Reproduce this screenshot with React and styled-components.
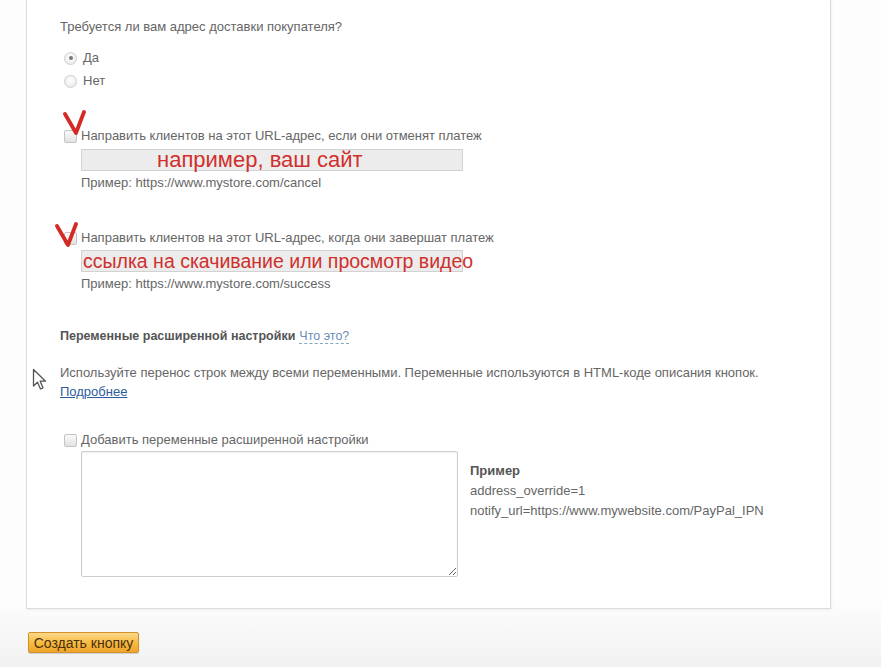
import React from "react";
import styled, { createGlobalStyle } from "styled-components";

const GlobalStyle = createGlobalStyle`
  html, body {
    margin: 0;
    padding: 0;
  }
  body {
    width: 881px;
    min-height: 667px;
    background: linear-gradient(to bottom, #fdfdfd 0, #fdfdfd 600px, #f1f1f1 667px);
    font-family: "Liberation Sans", Arial, sans-serif;
    color: #666;
    overflow: hidden;
  }
`;

const Page = styled.div`
  padding: 0 0 0 26px;
`;

const Panel = styled.div`
  position: relative;
  box-sizing: border-box;
  width: 805px;
  background: #fff;
  border: 1px solid #dcdcdc;
  border-top: none;
  box-shadow: 1px 1px 2px rgba(0, 0, 0, 0.06);
  padding: 18px 0 31px 33px;
  font-size: 13px;
  line-height: 18px;
`;

const Text = styled.div`
  color: #666;
`;

const RadioGroup = styled.div`
  display: flex;
  flex-direction: column;
  gap: 5px;
  margin-top: 13px;
  margin-left: 4px;
`;

const ChoiceRow = styled.label`
  display: flex;
  align-items: center;
  gap: 6px;
  height: 18px;
  color: #666;
`;

const Radio = styled.span`
  width: 11px;
  height: 11px;
  border-radius: 50%;
  border: 1px solid #cfcfcf;
  background: radial-gradient(circle at 50% 40%, #fff 0, #e6e6e6 100%);
  display: flex;
  align-items: center;
  justify-content: center;
  flex-shrink: 0;
  &::after {
    content: "";
    width: 4px;
    height: 4px;
    border-radius: 50%;
    background: ${(p) => (p.$checked ? "#777" : "transparent")};
  }
`;

const Check = styled.span`
  width: 11px;
  height: 11px;
  border: 1px solid #c4c4c4;
  border-radius: 2px;
  background: linear-gradient(to bottom, #fafafa, #e2e2e2);
  flex-shrink: 0;
`;

const CheckRow = styled.div`
  display: flex;
  align-items: center;
  gap: 4px;
  height: 18px;
  margin-top: ${(p) => p.$mt || 0}px;
  margin-left: 4px;
  color: #666;
`;

const FakeInput = styled.div`
  box-sizing: border-box;
  width: 382px;
  height: 22px;
  margin-top: ${(p) => p.$mt || 0}px;
  margin-left: 21px;
  background: #ececec;
  border: 1px solid #d2d2d2;
  white-space: nowrap;
  overflow: visible;
  font-size: ${(p) => p.$fs}px;
  line-height: 20px;
  color: #d0302c;
  padding-left: ${(p) => p.$pl || 0}px;
`;

const Hint = styled.div`
  margin-top: 3px;
  margin-left: 21px;
  color: #666;
`;

const Heading = styled.div`
  margin-top: 34px;
  font-weight: bold;
  font-size: 12.5px;
  color: #555;
  a {
    font-weight: normal;
    color: #6c8db5;
    text-decoration: none;
    border-bottom: 1px dashed #8aa4c4;
    margin-left: 4px;
  }
`;

const Paragraph = styled.p`
  margin: 18px 0 0;
  line-height: 19px;
  color: #666;
  a {
    color: #2c5c9c;
    text-decoration: underline;
  }
`;

const VarsRow = styled.div`
  display: flex;
  margin-top: 2px;
  margin-left: 21px;
`;

const Area = styled.textarea`
  box-sizing: border-box;
  width: 377px;
  height: 126px;
  border: 1px solid #cdcdcd;
  border-radius: 2px;
  box-shadow: inset 0 1px 2px rgba(0, 0, 0, 0.06);
  margin: 0;
  resize: both;
`;

const ExampleBox = styled.div`
  margin-left: 12px;
  padding-top: 10px;
  line-height: 20px;
  color: #666;
  b {
    color: #555;
  }
`;

const CreateButton = styled.button`
  margin: 23px 0 0 2px;
  width: 111px;
  height: 21px;
  padding: 0;
  border: 1px solid #d0902a;
  border-radius: 2px;
  background: linear-gradient(to bottom, #fcd88a 0, #f6b940 55%, #eea42a 100%);
  font-family: "Liberation Sans", Arial, sans-serif;
  font-size: 14px;
  color: #4a300a;
  box-shadow: 0 1px 1px rgba(0, 0, 0, 0.15);
`;

const Mark = styled.svg`
  position: absolute;
  left: ${(p) => p.$x}px;
  top: ${(p) => p.$y}px;
  pointer-events: none;
`;

const Cursor = styled.svg`
  position: absolute;
  left: 5px;
  top: 368px;
`;

const RedV = ({ x, y }) => (
  <Mark $x={x} $y={y} width="24" height="26" viewBox="0 0 24 26">
    <path
      d="M2 4 L13 23 L21 2"
      fill="none"
      stroke="#d42a24"
      strokeWidth="3.8"
      strokeLinecap="round"
      strokeLinejoin="round"
    />
  </Mark>
);

const App = () => {
  return (
    <>
      <GlobalStyle />
      <Page>
        <Panel>
          <Text>Требуется ли вам адрес доставки покупателя?</Text>
          <RadioGroup>
            <ChoiceRow>
              <Radio $checked />
              Да
            </ChoiceRow>
            <ChoiceRow>
              <Radio />
              Нет
            </ChoiceRow>
          </RadioGroup>

          <CheckRow $mt={37}>
            <Check />
            <span>Направить клиентов на этот URL-адрес, если они отменят платеж</span>
          </CheckRow>
          <FakeInput $mt={4} $pl={75} $fs={22}>например, ваш сайт</FakeInput>
          <Hint>Пример: https://www.mystore.com/cancel</Hint>

          <CheckRow $mt={37}>
            <Check />
            <span>Направить клиентов на этот URL-адрес, когда они завершат платеж</span>
          </CheckRow>
          <FakeInput $mt={3} $pl={1} $fs={19.5}>ссылка на скачивание или просмотр видео</FakeInput>
          <Hint>Пример: https://www.mystore.com/success</Hint>

          <Heading>
            Переменные расширенной настройки<a href="#">Что это?</a>
          </Heading>
          <Paragraph>
            Используйте перенос строк между всеми переменными. Переменные используются в HTML-коде описания кнопок.
            <br />
            <a href="#">Подробнее</a>
          </Paragraph>

          <CheckRow $mt={30}>
            <Check />
            <span>Добавить переменные расширенной настройки</span>
          </CheckRow>
          <VarsRow>
            <Area />
            <ExampleBox>
              <b>Пример</b>
              <div>address_override=1</div>
              <div>notify_url=https://www.mywebsite.com/PayPal_IPN</div>
            </ExampleBox>
          </VarsRow>

          <RedV x={36} y={110} />
          <RedV x={28} y={222} />
          <Cursor width="16" height="24" viewBox="0 0 16 24">
            <path
              d="M1.5 1.5 L1.5 18 L5.5 14.2 L8.5 21 L11 19.8 L8.2 13.2 L13.5 13.2 Z"
              fill="#fff"
              stroke="#555"
              strokeWidth="1.3"
              strokeLinejoin="round"
            />
          </Cursor>
        </Panel>
        <CreateButton>Создать кнопку</CreateButton>
      </Page>
    </>
  );
};

export default App;
